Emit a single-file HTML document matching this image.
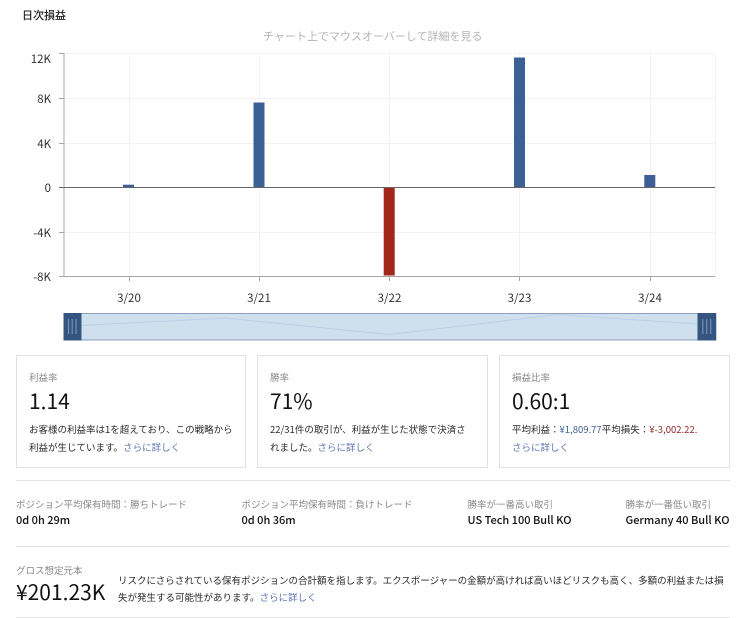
<!DOCTYPE html>
<html lang="ja">
<head>
<meta charset="utf-8">
<style>
html,body{margin:0;padding:0;background:#fff}
body{position:relative;width:740px;height:618px;overflow:hidden;font-family:"Noto Sans CJK JP","Liberation Sans",sans-serif;color:#222}
.t{position:absolute;white-space:nowrap}
.card{position:absolute;top:355px;height:110.5px;border:1px solid #e2e2e2;box-sizing:content-box}
.lab{font-size:9.5px;color:#888;line-height:14px}
.big{font-size:21px;color:#111;line-height:26px}
.desc{font-size:9.5px;color:#2a2a2a;line-height:18px}
.blue{color:#5f73b5}
.hr{position:absolute;left:16px;width:714px;height:1px;background:#e2e2e2}
.val{font-size:11px;font-weight:500;color:#111;line-height:16px}
svg{position:absolute;left:0;top:0}
svg text{font-family:"Noto Sans CJK JP","Liberation Sans",sans-serif;font-size:11.5px;fill:#333}
</style>
</head>
<body>
<svg width="740" height="345" viewBox="0 0 740 345">
  <g stroke="#f2f2f4" stroke-width="1" fill="none">
    <path d="M64 53.5H716M64 98.5H716M64 143.5H716M64 232.5H716"/>
    <path d="M129.5 53V277M259.5 53V277M389.5 53V277M519.5 53V277M650.5 53V277M715.5 53V277"/>
  </g>
  <rect x="123" y="184.7" width="11" height="3" fill="#3c5f95"/>
  <rect x="253.5" y="102.5" width="11" height="85" fill="#3c5f95"/>
  <rect x="383.7" y="187.5" width="11" height="88" fill="#a3261d"/>
  <rect x="514" y="57.5" width="11" height="130" fill="#3c5f95"/>
  <rect x="644.3" y="175" width="11" height="12.5" fill="#3c5f95"/>
  <g stroke="#a6a6a6" stroke-width="1" fill="none">
    <path d="M64 53V277"/>
    <path d="M59 53.5H64M59 98.5H64M59 143.5H64M59 232.5H64M59 276.5H64"/>
    <path d="M64 276.5H715"/>
    <path d="M129.5 277V281M259.5 277V281M389.5 277V281M519.5 277V281M650.5 277V281"/>
  </g>
  <path d="M59 187.5H715" stroke="#666" stroke-width="1"/>
  <g text-anchor="end">
    <text x="51" y="63">12K</text>
    <text x="51" y="103">8K</text>
    <text x="51" y="148">4K</text>
    <text x="51" y="192">0</text>
    <text x="51" y="237">-4K</text>
    <text x="51" y="281">-8K</text>
  </g>
  <g text-anchor="middle">
    <text x="129" y="302">3/20</text>
    <text x="259" y="302">3/21</text>
    <text x="389.5" y="302">3/22</text>
    <text x="519.5" y="302">3/23</text>
    <text x="650" y="302">3/24</text>
  </g>
  <rect x="64" y="313.5" width="652" height="26.5" fill="#d0dfee" stroke="#8ba1c2" stroke-width="1"/>
  <path d="M81 325.5L225 318L390 334.5L557 314.5L697 324" fill="none" stroke="#bccfe3" stroke-width="1"/>
  <rect x="63.5" y="313" width="18" height="27.5" fill="#34557f"/>
  <rect x="697.5" y="313" width="18.5" height="27.5" fill="#34557f"/>
  <path d="M68.5 319V334M72.2 319V334M76 319V334M702.8 319V334M706.7 319V334M710.7 319V334" stroke="#7390b5" stroke-width="1.2"/>
</svg>

<div class="t" style="left:22px;top:7px;font-size:11px;font-weight:500;color:#222;line-height:16px">日次損益</div>
<div class="t" style="left:263px;top:28px;font-size:11px;color:#b4b4b4;line-height:16px">チャート上でマウスオーバーして詳細を見る</div>

<div class="card" style="left:16px;width:228px"></div>
<div class="t lab" style="left:29px;top:369.5px">利益率</div>
<div class="t big" style="left:29px;top:388px">1.14</div>
<div class="t desc" style="left:29px;top:420px">お客様の利益率は1を超えており、この戦略から</div>
<div class="t desc" style="left:29px;top:437.5px">利益が生じています。<span class="blue">さらに詳しく</span></div>

<div class="card" style="left:257px;width:229px"></div>
<div class="t lab" style="left:270px;top:369.5px">勝率</div>
<div class="t big" style="left:270px;top:388px">71%</div>
<div class="t desc" style="left:270px;top:420px">22/31件の取引が、利益が生じた状態で決済さ</div>
<div class="t desc" style="left:270px;top:437.5px">れました。<span class="blue">さらに詳しく</span></div>

<div class="card" style="left:499px;width:229px"></div>
<div class="t lab" style="left:512px;top:369.5px">損益比率</div>
<div class="t big" style="left:512px;top:388px">0.60:1</div>
<div class="t desc" style="left:512px;top:420px">平均利益：<span style="color:#3c5f95">¥1,809.77</span>平均損失：<span style="color:#8f2a2a">¥-3,002.22.</span></div>
<div class="t desc blue" style="left:512px;top:437.5px">さらに詳しく</div>

<div class="hr" style="top:480px"></div>
<div class="t lab" style="left:16px;top:496.5px">ポジション平均保有時間：勝ちトレード</div>
<div class="t val" style="left:16px;top:512px">0d 0h 29m</div>
<div class="t lab" style="left:241.5px;top:496.5px">ポジション平均保有時間：負けトレード</div>
<div class="t val" style="left:241.5px;top:512px">0d 0h 36m</div>
<div class="t lab" style="left:467.5px;top:496.5px">勝率が一番高い取引</div>
<div class="t val" style="left:467.5px;top:512px">US Tech 100 Bull KO</div>
<div class="t lab" style="left:625.5px;top:496.5px">勝率が一番低い取引</div>
<div class="t val" style="left:625.5px;top:512px">Germany 40 Bull KO</div>

<div class="hr" style="top:546px"></div>
<div class="t lab" style="left:16px;top:562.5px">グロス想定元本</div>
<div class="t" style="left:16px;top:577.5px;font-size:21px;color:#111;line-height:28px">¥201.23K</div>
<div class="t desc" style="left:118px;top:570.5px">リスクにさらされている保有ポジションの合計額を指します。エクスポージャーの金額が高ければ高いほどリスクも高く、多額の利益または損</div>
<div class="t desc" style="left:118px;top:588px">失が発生する可能性があります。<span class="blue">さらに詳しく</span></div>
<div class="hr" style="top:617px"></div>
</body>
</html>
